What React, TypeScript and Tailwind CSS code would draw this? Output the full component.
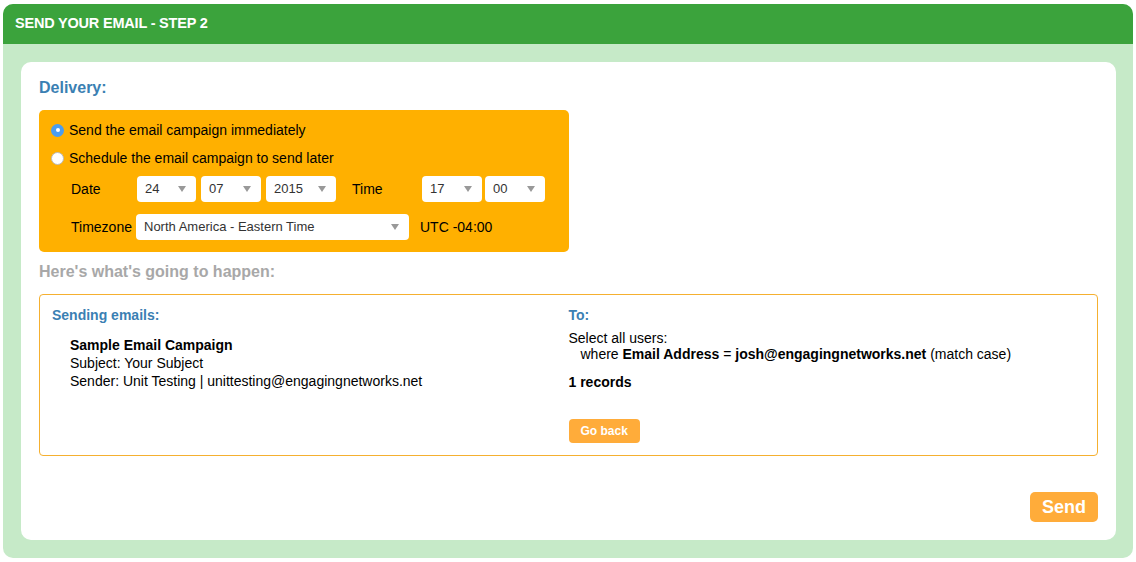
import React from "react";

function Select({ value, w }: { value: string; w: string }) {
  return (
    <div className={`${w} h-[26px] bg-white rounded-[4px] flex items-center justify-between pl-[8px] pr-[10px] text-[13px] text-[#333]`}>
      <span>{value}</span>
      <span className="w-0 h-0 border-l-[4px] border-r-[4px] border-t-[6px] border-l-transparent border-r-transparent border-t-[#999]" />
    </div>
  );
}

function Radio({ checked }: { checked?: boolean }) {
  return checked ? (
    <span className="w-[13px] h-[13px] rounded-full bg-[#4a9df0] flex items-center justify-center">
      <span className="w-[4px] h-[4px] rounded-full bg-white" />
    </span>
  ) : (
    <span className="w-[13px] h-[13px] rounded-full bg-white border border-[#bbb]" />
  );
}

export default function App() {
  return (
    <div className="w-[1136px] h-[562px] bg-white pt-[4px] px-[3px] font-['Liberation_Sans',Arial,sans-serif] text-[14px] text-black">
      <div className="w-[1130px] h-[554px] rounded-[10px] overflow-hidden bg-[#c6eac8] flex flex-col">
        {/* header */}
        <div className="h-[40px] bg-[#3ba33c] flex items-center px-[12px]">
          <h1 className="text-white font-bold text-[14.5px] tracking-[-0.2px]">SEND YOUR EMAIL - STEP 2</h1>
        </div>

        <div className="flex-1 pl-[18px] pr-[17px] pt-[18px] pb-[18px]">
          <div className="h-[478px] bg-white rounded-[10px] pl-[18px] pr-[18px] pt-[17px] flex flex-col">
            <h2 className="text-[#3a80b3] font-bold text-[16px] leading-[18px]">Delivery:</h2>

            {/* delivery options */}
            <div className="mt-[13px] w-[530px] h-[142px] bg-[#ffb000] rounded-[5px] pl-[12px] pt-[12px]">
              <label className="flex items-center gap-[5px] h-[16px]">
                <Radio checked />
                <span>Send the email campaign immediately</span>
              </label>
              <label className="flex items-center gap-[5px] h-[16px] mt-[12px]">
                <Radio />
                <span>Schedule the email campaign to send later</span>
              </label>
              <div className="flex items-center mt-[10px] pl-[20px]">
                <span className="w-[66px]">Date</span>
                <div className="flex gap-[5px]">
                  <Select value="24" w="w-[59px]" />
                  <Select value="07" w="w-[60px]" />
                  <Select value="2015" w="w-[70px]" />
                </div>
                <span className="ml-[16px] w-[70px]">Time</span>
                <div className="flex gap-[3px]">
                  <Select value="17" w="w-[60px]" />
                  <Select value="00" w="w-[60px]" />
                </div>
              </div>
              <div className="flex items-center mt-[12px] pl-[20px]">
                <span className="w-[65px]">Timezone</span>
                <Select value="North America - Eastern Time" w="w-[273px]" />
                <span className="ml-[11px]">UTC -04:00</span>
              </div>
            </div>

            <h2 className="mt-[11px] text-[#a8a8a8] font-bold text-[16px] leading-[18px]">Here's what's going to happen:</h2>

            {/* summary */}
            <div className="mt-[13px] h-[162px] border border-[#f5b030] rounded-[4px] px-[12px] pt-[11px] grid grid-cols-2">
              <div>
                <h3 className="text-[#3a80b3] font-bold text-[14px] leading-[18px]">Sending emails:</h3>
                <div className="mt-[12px] pl-[18px] leading-[18px]">
                  <div className="font-bold">Sample Email Campaign</div>
                  <div>Subject: Your Subject</div>
                  <div>Sender: Unit Testing | unittesting@engagingnetworks.net</div>
                </div>
              </div>
              <div>
                <h3 className="text-[#3a80b3] font-bold text-[14px] leading-[18px]">To:</h3>
                <div className="mt-[6px] leading-[16px]">
                  <div>Select all users:</div>
                  <div className="pl-[12px]">
                    where <b>Email Address</b> = <b>josh@engagingnetworks.net</b> (match case)
                  </div>
                </div>
                <div className="mt-[12px] font-bold leading-[16px]">1 records</div>
                <button className="mt-[29px] h-[24px] px-[12px] rounded-[4px] bg-[#ffac3a] text-white font-bold text-[12px]">
                  Go back
                </button>
              </div>
            </div>

            <div className="flex justify-end mt-[36px]">
              <button className="h-[30px] w-[68px] rounded-[5px] bg-[#ffac3a] text-white font-bold text-[18px]">
                Send
              </button>
            </div>
          </div>
        </div>
      </div>
    </div>
  );
}
